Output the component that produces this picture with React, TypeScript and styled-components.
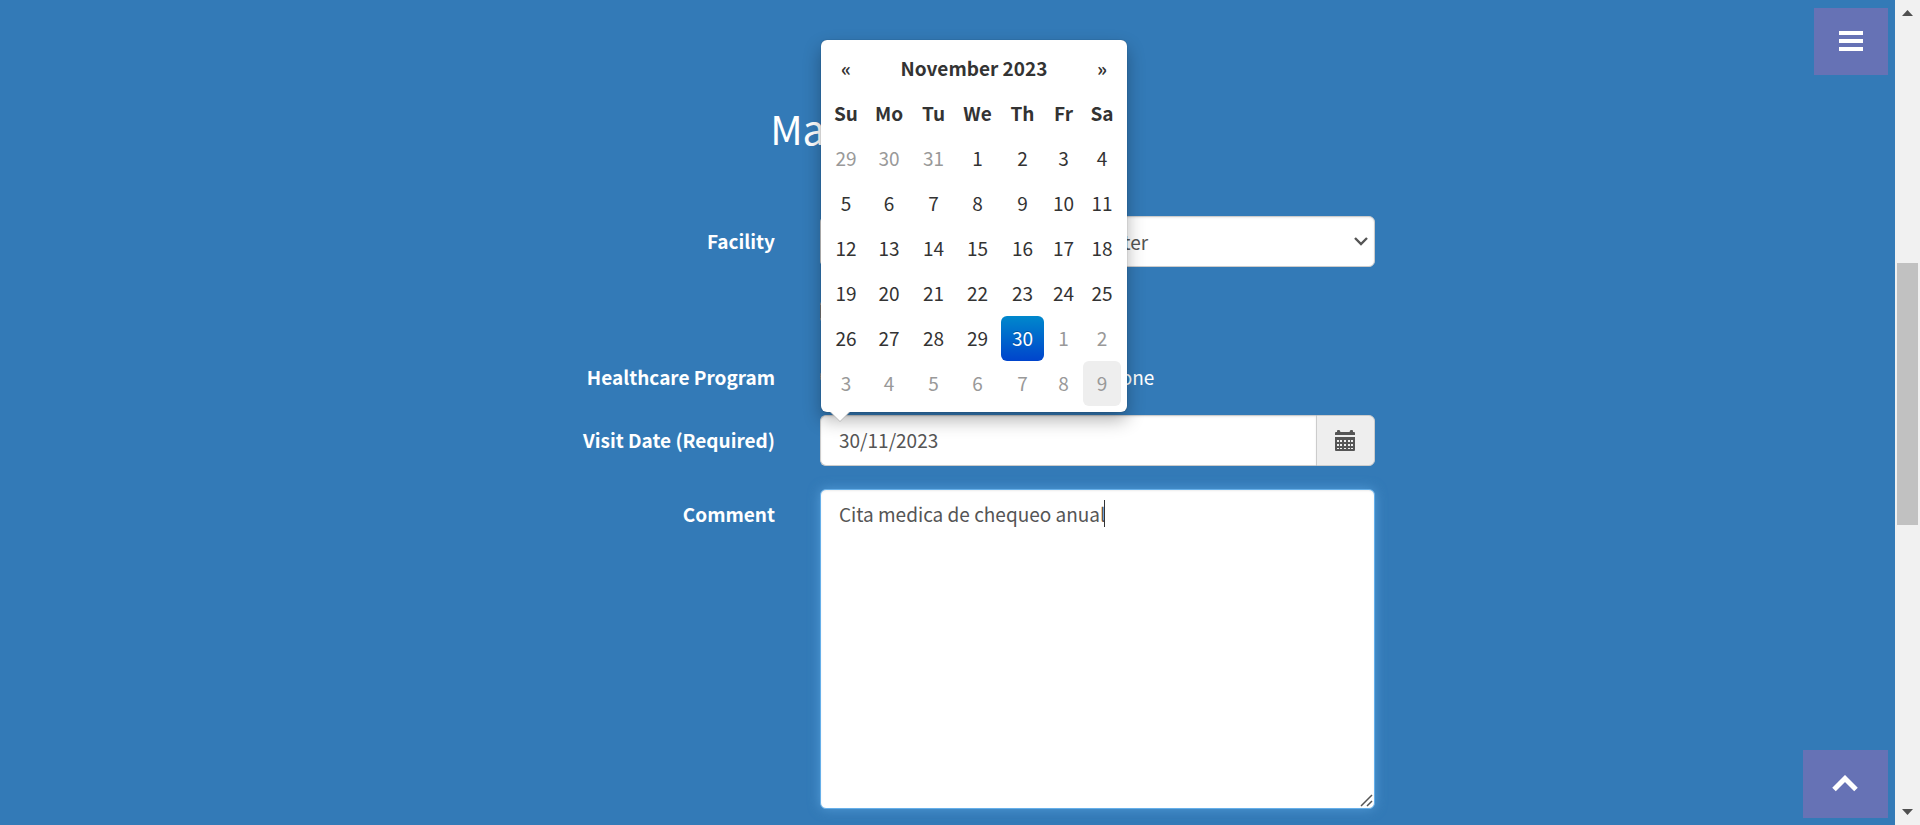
import React, { useState } from 'react';
import styled, { createGlobalStyle, css } from 'styled-components';

const GlobalStyle = createGlobalStyle`
  *, *::before, *::after { box-sizing: border-box; }
  html, body { margin: 0; padding: 0; }
  body {
    background: #337ab7;
    color: #fff;
    font-family: "Noto Sans CJK SC", "Noto Sans", sans-serif;
    font-size: 19px;
    line-height: 27px;
  }
  button, input, select, textarea { font: inherit; color: inherit; }
`;

const Page = styled.div`
  display: flex;
  min-height: 100vh;
`;

const Main = styled.main`
  flex: 1;
  min-width: 0;
  padding: 98px 16px 16px;
`;

const Title = styled.h2`
  margin: 0 0 58px;
  font-size: 40px;
  line-height: 60px;
  font-weight: 400;
  text-align: center;
`;

const Form = styled.form`
  display: grid;
  gap: 23px;
  width: 100%;
  max-width: 855px;
  margin: 0 auto;
`;

const Row = styled.div`
  display: grid;
  grid-template-columns: 255px minmax(0, 1fr);
  column-gap: 45px;
`;

const labelText = css`
  padding-top: 11px;
  font-weight: 700;
  text-align: right;
`;

const Label = styled.label`
  ${labelText}
`;

const GroupLabel = styled.span<{ $compact?: boolean }>`
  ${labelText}
  ${(p) => p.$compact && 'padding-top: 8px;'}
`;

const Options = styled.div<{ $tall?: boolean }>`
  grid-column: 2;
  display: flex;
  align-items: flex-start;
  gap: 18px;
  padding-top: 8px;
  min-height: ${(p) => (p.$tall ? '42px' : '37px')};
`;

const Option = styled.label`
  display: flex;
  align-items: center;
  gap: 11px;

  input {
    width: 19px;
    height: 19px;
    margin: 0;
  }
`;

const control = css`
  display: block;
  width: 100%;
  margin: 0;
  border: 1px solid #ccc;
  border-radius: 6px;
  background: #fff;
  color: #555;
  box-shadow: inset 0 1px 2px rgba(0, 0, 0, 0.08);
  outline: none;
`;

const SelectWrap = styled.div`
  position: relative;
`;

const Select = styled.select`
  ${control}
  height: 51px;
  padding: 0 18px;
  appearance: none;
`;

const Chevron = styled.svg`
  position: absolute;
  right: 7px;
  top: 19px;
  pointer-events: none;
`;

const DateField = styled.div`
  position: relative;
  display: flex;
`;

const DateInput = styled.input`
  ${control}
  flex: 1;
  min-width: 0;
  height: 51px;
  padding: 0 18px 2px;
  border-right: 0;
  border-radius: 6px 0 0 6px;
`;

const CalendarButton = styled.button`
  display: flex;
  align-items: center;
  justify-content: center;
  width: 59px;
  padding: 0 2px 0 0;
  border: 1px solid #ccc;
  border-radius: 0 6px 6px 0;
  background: #eee;
  color: #555;
`;

const CommentWrap = styled.div`
  position: relative;
  display: grid;
`;

const Comment = styled.textarea`
  ${control}
  height: 320px;
  padding: 10px 18px;
  border-color: #66afe9;
  resize: none;
  caret-color: transparent;
  box-shadow: inset 0 1px 2px rgba(0, 0, 0, 0.08), 0 0 12px rgba(102, 175, 233, 0.6);
`;

const Caret = styled.div`
  position: absolute;
  inset: 0;
  padding: 11px 18px;
  color: transparent;
  pointer-events: none;

  span {
    display: inline-block;
    border-right: 1px solid #333;
    white-space: pre;
  }
`;

const Grip = styled.svg`
  position: absolute;
  right: 2px;
  bottom: 2px;
  pointer-events: none;
`;

const Picker = styled.div`
  position: absolute;
  z-index: 2;
  bottom: calc(100% + 3px);
  left: 1px;
  padding: 6px;
  border-radius: 6px;
  background: #fff;
  color: #333;
  box-shadow: 0 0 1px rgba(0, 0, 0, 0.5), 0 8px 18px rgba(0, 0, 0, 0.3);

  &::before,
  &::after {
    content: '';
    position: absolute;
    top: 100%;
    left: 9px;
    border: 10px solid transparent;
    border-bottom: 0;
    border-top-color: #bbb;
  }

  &::after {
    left: 10px;
    border-width: 9px;
    border-bottom: 0;
    border-top-color: #fff;
  }
`;

const Calendar = styled.table`
  width: 294px;
  table-layout: fixed;
  border-collapse: collapse;

  th, td {
    height: 45px;
    padding: 0;
    text-align: center;
  }

  th {
    padding-bottom: 3px;
  }
`;

type DayKind = 'normal' | 'muted' | 'selected' | 'hover';

const Day = styled.button<{ $kind?: DayKind }>`
  display: block;
  width: 100%;
  height: 45px;
  padding: 0 0 3px;
  border: 0;
  border-radius: 6px;
  background: none;
  font-weight: 400;
  color: ${(p) => (p.$kind === 'muted' || p.$kind === 'hover' ? '#999' : '#333')};
  ${(p) => p.$kind === 'hover' && 'background: #eee;'}
  ${(p) =>
    p.$kind === 'selected' &&
    css`
      background: linear-gradient(#08c, #04c);
      color: #fff;
      text-shadow: 0 -1px 0 rgba(0, 0, 0, 0.25);
    `}
`;

const Step = styled(Day)`
  height: 42px;
  padding: 0;
  font-weight: 700;
`;

const Floating = styled.button<{ $top?: boolean }>`
  position: fixed;
  z-index: 3;
  right: 32px;
  ${(p) => (p.$top ? 'top: 8px;' : 'bottom: 7px;')}
  display: flex;
  align-items: center;
  justify-content: center;
  width: ${(p) => (p.$top ? '74px' : '85px')};
  height: ${(p) => (p.$top ? '67px' : '68px')};
  padding: 0 1px 1px 0;
  border: 0;
  background: #6672b5;
  color: #fff;
`;

const ScrollBar = styled.div`
  display: flex;
  flex-direction: column;
  justify-content: space-between;
  align-items: center;
  width: 25px;
  padding: 10px 2px;
  background: #f1f1f1;
`;

const Thumb = styled.div`
  align-self: stretch;
  height: 262px;
  margin-bottom: 38px;
  background: #c1c1c1;
`;

const ScrollArrow = ({ down }: { down?: boolean }) => (
  <svg width="11" height="6" viewBox="0 0 11 6" fill="#505050" aria-hidden="true">
    <path d={down ? 'M0 0h11L5.5 6z' : 'M0 6h11L5.5 0z'} />
  </svg>
);

const CalendarIcon = () => (
  <svg width="20" height="21" viewBox="0 0 20 21" fill="currentColor" aria-hidden="true">
    <path d="M0 5V3q0-1 1-1h1V1q0-1 1-1h1q1 0 1 1q0 1 1 1h8q1 0 1-1q0-1 1-1h1q1 0 1 1v1h1q1 0 1 1v2z" />
    <path
      fillRule="evenodd"
      d="M0 7h20v13q0 1-1 1H1q-1 0-1-1zM2 10v2h2v-2zM5 10v2h2v-2zM9 10v2h2v-2zM13 10v2h2v-2zM16 10v2h2v-2zM2 14v2h2v-2zM5 14v2h2v-2zM9 14v2h2v-2zM13 14v2h2v-2zM16 14v2h2v-2zM2 18v1h2v-1zM5 18v1h2v-1zM9 18v1h2v-1zM13 18v1h2v-1zM16 18v1h2v-1z"
    />
  </svg>
);

const weekdays = ['Su', 'Mo', 'Tu', 'We', 'Th', 'Fr', 'Sa'];
const columnWidths = [38, 48, 41, 47, 43, 39, 38];
const weeks = [
  [29, 30, 31, 1, 2, 3, 4],
  [5, 6, 7, 8, 9, 10, 11],
  [12, 13, 14, 15, 16, 17, 18],
  [19, 20, 21, 22, 23, 24, 25],
  [26, 27, 28, 29, 30, 1, 2],
  [3, 4, 5, 6, 7, 8, 9],
];

const dayKind = (week: number, day: number): DayKind => {
  if (week === 5 && day === 9) return 'hover';
  if (week === 4 && day === 30) return 'selected';
  if ((week === 0 && day > 20) || (week === 4 && day < 10) || week === 5) return 'muted';
  return 'normal';
};

const DatePicker = () => (
  <Picker>
    <Calendar>
      <colgroup>
        {columnWidths.map((width, i) => (
          <col key={i} width={width} />
        ))}
      </colgroup>
      <thead>
        <tr>
          <th><Step type="button" aria-label="Previous month">«</Step></th>
          <th colSpan={5}>November 2023</th>
          <th><Step type="button" aria-label="Next month">»</Step></th>
        </tr>
        <tr>
          {weekdays.map((name) => (
            <th key={name} scope="col">{name}</th>
          ))}
        </tr>
      </thead>
      <tbody>
        {weeks.map((days, week) => (
          <tr key={week}>
            {days.map((day) => (
              <td key={day}>
                <Day type="button" $kind={dayKind(week, day)}>{day}</Day>
              </td>
            ))}
          </tr>
        ))}
      </tbody>
    </Calendar>
  </Picker>
);

export default function App() {
  const [comment, setComment] = useState('Cita medica de chequeo anual');
  const [date, setDate] = useState('30/11/2023');

  return (
    <>
      <GlobalStyle />
      <Page>
        <Main>
          <Title>Make Appointment</Title>
          <Form>
            <Row>
              <Label htmlFor="facility">Facility</Label>
              <SelectWrap>
                <Select id="facility" defaultValue="Hongkong CURA Healthcare Center">
                  <option>Tokyo CURA Healthcare Center</option>
                  <option>Hongkong CURA Healthcare Center</option>
                  <option>Seoul CURA Healthcare Center</option>
                </Select>
                <Chevron width="14" height="12" viewBox="0 0 14 12" fill="none" stroke="#555" strokeWidth="2.4" aria-hidden="true">
                  <path d="M1 3l6 6 6-6" />
                </Chevron>
              </SelectWrap>
            </Row>
            <Row>
              <Options $tall>
                <Option>
                  <input type="checkbox" />
                  Apply for readmission
                </Option>
              </Options>
            </Row>
            <Row role="radiogroup" aria-labelledby="program">
              <GroupLabel id="program" $compact>Healthcare Program</GroupLabel>
              <Options>
                <Option><input type="radio" name="program" />Medicare</Option>
                <Option><input type="radio" name="program" />Medicaid</Option>
                <Option><input type="radio" name="program" />None</Option>
              </Options>
            </Row>
            <Row>
              <Label htmlFor="date">Visit Date (Required)</Label>
              <DateField>
                <DateInput id="date" value={date} onChange={(e) => setDate(e.target.value)} />
                <CalendarButton type="button" aria-label="Choose a date">
                  <CalendarIcon />
                </CalendarButton>
                <DatePicker />
              </DateField>
            </Row>
            <Row>
              <Label htmlFor="comment">Comment</Label>
              <CommentWrap>
                <Comment id="comment" value={comment} onChange={(e) => setComment(e.target.value)} />
                <Caret aria-hidden="true"><span>{comment}</span></Caret>
                <Grip width="13" height="13" viewBox="0 0 13 13" stroke="#555" strokeWidth="1.5" aria-hidden="true">
                  <path d="M1 12L12 1M7 12l5-5" />
                </Grip>
              </CommentWrap>
            </Row>
          </Form>
        </Main>
        <ScrollBar aria-hidden="true">
          <ScrollArrow />
          <Thumb />
          <ScrollArrow down />
        </ScrollBar>
      </Page>
      <Floating $top type="button" aria-label="Open menu">
        <svg width="24" height="20" viewBox="0 0 24 20" fill="currentColor" aria-hidden="true">
          <path d="M0 0h24v4H0zM0 8h24v4H0zM0 16h24v4H0z" />
        </svg>
      </Floating>
      <Floating type="button" aria-label="Back to top">
        <svg width="26" height="17" viewBox="0 0 26 17" fill="none" stroke="currentColor" strokeWidth="5" aria-hidden="true">
          <path d="M2 14.500L13 3.500l11 11" />
        </svg>
      </Floating>
    </>
  );
}
